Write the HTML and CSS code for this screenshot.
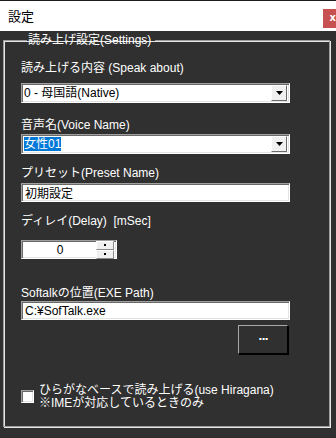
FILE: index.html
```html
<!DOCTYPE html>
<html lang="ja">
<head>
    <meta charset="UTF-8">
    <title>設定</title>
    <link rel="stylesheet" href="styles.css">
</head>
<body>
    <div class="titlebar">
        <span class="title">設定</span>
        <span class="close">x</span>
    </div>
    <div class="window">
        <fieldset class="group">
            <legend>読み上げ設定(Settings)</legend>

            <div class="label first">読み上げる内容 (Speak about)</div>
            <div class="combo combo-a">
                <span class="value">0 - 母国語(Native)</span>
                <span class="drop"><svg width="7" height="4" viewBox="0 0 7 4"><path d="M0 0h7L3.5 4z" fill="#000"/></svg></span>
            </div>

            <div class="label l2">音声名(Voice Name)</div>
            <div class="combo combo-b">
                <span class="value"><span class="selected">女性01</span></span>
                <span class="drop"><svg width="7" height="4" viewBox="0 0 7 4"><path d="M0 0h7L3.5 4z" fill="#000"/></svg></span>
            </div>

            <div class="label l3">プリセット(Preset Name)</div>
            <div class="textbox t3">初期設定</div>

            <div class="label l4">ディレイ(Delay)&nbsp;&nbsp;[mSec]</div>
            <div class="spinner">
                <span class="num">0</span>
                <span class="arrows">
                    <span class="arrow"></span>
                    <span class="arrow"></span>
                </span>
            </div>

            <div class="label l5">Softalkの位置(EXE Path)</div>
            <div class="textbox t5">C:¥SofTalk.exe</div>

            <div class="btnrow">
                <div class="btn">···</div>
            </div>

            <div class="check">
                <span class="box"></span>
                <div class="checktext">
                    <div>ひらがなベースで読み上げる(use Hiragana)</div>
                    <div>※IMEが対応しているときのみ</div>
                </div>
            </div>
        </fieldset>
    </div>
</body>
</html>
```

FILE: styles.css
```css
body {
    margin: 0;
    width: 336px;
    height: 438px;
    background: #303030;
    font-family: "Liberation Sans", "Noto Sans CJK JP", sans-serif;
    font-size: 12px;
    color: #fff;
    overflow: hidden;
}
.titlebar {
    height: 30px;
    border-top: 1px solid #1c1c1c;
    background: #fff;
    display: flex;
    align-items: center;
    justify-content: space-between;
}
.title {
    color: #000;
    font-size: 13px;
    margin-left: 8px;
    margin-top: -1px;
}
.close {
    width: 13px;
    height: 19px;
    margin-top: 5px;
    background: #c75050;
    color: #fff;
    font-family: "DejaVu Sans", sans-serif;
    font-weight: bold;
    font-size: 10px;
    line-height: 18px;
    text-align: right;
}
.window {
    padding: 2px 6px 0 3px;
}
.group {
    margin: 0;
    padding: 0 0 0 17px;
    height: 394px;
    box-sizing: border-box;
    border: 1px solid #9c9c9c;
    box-shadow: inset 1px 1px 0 #e6e6e6, 1px 1px 0 #e6e6e6;
}
legend {
    padding: 0 4px 0 1px;
    margin-left: 6px;
    line-height: 14px;
    font-size: 12px;
}
.label {
    line-height: 14px;
    white-space: nowrap;
}
.first { margin-top: 14px; }
.l2 { margin-top: 15px; }
.l3 { margin-top: 12px; }
.l4 { margin-top: 12px; }
.l5 { margin-top: 27px; }

.combo, .textbox, .spinner {
    width: 269px;
    box-sizing: border-box;
    background: #fff;
    color: #000;
    border: 1px solid;
    border-color: #a0a0a0 #fff #fff #a0a0a0;
    box-shadow: inset 1px 1px 0 #696969, inset -1px -1px 0 #e3e3e3;
    display: flex;
    align-items: center;
}
.combo {
    height: 20px;
    justify-content: space-between;
}
.combo-a { margin-top: 8px; }
.combo-b { margin-top: 2px; }
.value {
    padding-left: 2px;
    line-height: 15px;
}
.selected {
    background: #0078d7;
    color: #fff;
}
.drop {
    width: 16px;
    height: 16px;
    margin-right: 2px;
    box-sizing: border-box;
    background: #f0f0f0;
    border: 1px solid;
    border-color: #fff #696969 #696969 #fff;
    display: flex;
    align-items: center;
    justify-content: center;
}
.textbox {
    height: 19px;
    padding-left: 3px;
}
.t3 { margin-top: 3px; }
.t5 { margin-top: 1px; }

.spinner {
    width: 96px;
    height: 19px;
    margin-top: 12px;
    justify-content: space-between;
}
.num {
    flex: 1;
    text-align: center;
    padding-left: 2px;
}
.arrows {
    display: flex;
    flex-direction: column;
    margin-right: 2px;
}
.arrow {
    width: 16px;
    height: 7px;
    box-sizing: content-box;
    background: #f0f0f0;
    border: 1px solid;
    border-color: #fff #8a8a8a #8a8a8a #fff;
    display: flex;
    align-items: center;
    justify-content: center;
}
.arrow::after {
    content: "";
    width: 2px;
    height: 2px;
    background: #000;
}
.btnrow {
    display: flex;
    justify-content: flex-end;
    width: 267px;
    margin-top: 5px;
}
.btn {
    width: 50px;
    height: 29px;
    box-sizing: border-box;
    border: 1px solid;
    border-color: #a8a8a8 #000 #000 #a8a8a8;
    box-shadow: 1px 1px 0 #000;
    font-family: "DejaVu Sans", sans-serif;
    font-weight: bold;
    font-size: 11px;
    letter-spacing: -1px;
    display: flex;
    align-items: center;
    justify-content: center;
}
.check {
    display: flex;
    align-items: center;
    margin-top: 30px;
}
.box {
    width: 13px;
    height: 13px;
    box-sizing: border-box;
    background: #fff;
    border: 1px solid;
    border-color: #a0a0a0 #fff #fff #a0a0a0;
    box-shadow: inset 1px 1px 0 #696969, inset -1px -1px 0 #e3e3e3;
    margin-right: 5px;
    margin-top: -2px;
}
.checktext {
    line-height: 13px;
    white-space: nowrap;
}
```
